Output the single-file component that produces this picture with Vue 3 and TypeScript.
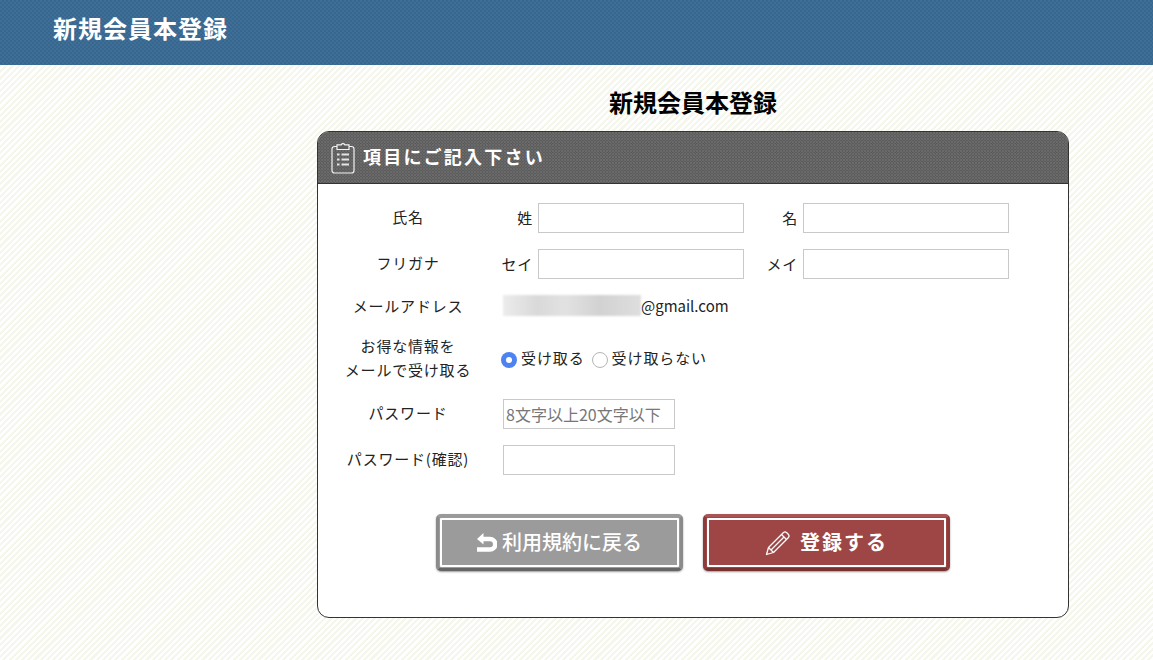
<script setup lang="ts">
interface NameField { sub: string }
const rows: { label: string; fields: NameField[] }[] = [
  { label: '氏名', fields: [{ sub: '姓' }, { sub: '名' }] },
  { label: 'フリガナ', fields: [{ sub: 'セイ' }, { sub: 'メイ' }] },
]
</script>

<template>
  <div class="page">
    <header class="top"><h1>新規会員本登録</h1></header>
    <main class="main">
      <h2 class="title">新規会員本登録</h2>
      <section class="card">
        <div class="card-head">
          <svg class="clip" width="26" height="32" viewBox="0 0 26 32" fill="none" stroke="#f2f2f2" stroke-width="1.2">
            <rect x="2" y="4.5" width="22" height="26.5" rx="2.5" />
            <path d="M7 4.5V2.8h4.2a2 2 0 0 1 3.6 0H19V7.5H7z" fill="#5c5c5c" />
            <path d="M7 12.5h2.5M7 17.5h2.5M7 22.5h2.5" stroke-width="1.8" stroke="#e4e4e4" />
            <path d="M11.5 12.5h7.5M11.5 17.5h7.5M11.5 22.5h7.5" stroke-width="1.8" stroke="#e4e4e4" />
          </svg>
          <span class="head-text">項目にご記入下さい</span>
        </div>
        <form class="form" @submit.prevent>
          <div v-for="row in rows" :key="row.label" class="row name-row">
            <div class="label">{{ row.label }}</div>
            <div class="value names">
              <label v-for="f in row.fields" :key="f.sub" class="name-field">
                <span class="sub">{{ f.sub }}</span>
                <input class="input wide" type="text" />
              </label>
            </div>
          </div>
          <div class="row email-row">
            <div class="label">メールアドレス</div>
            <div class="value email"><span class="blur"></span><span class="addr">@gmail.com</span></div>
          </div>
          <div class="row radio-row">
            <div class="label two">お得な情報を<br />メールで受け取る</div>
            <div class="value radios">
              <span class="radio on"></span><span class="r-text">受け取る</span>
              <span class="radio"></span><span class="r-text">受け取らない</span>
            </div>
          </div>
          <div class="row pw-row">
            <div class="label">パスワード</div>
            <div class="value pw"><input class="input short" type="text" placeholder="8文字以上20文字以下" /></div>
          </div>
          <div class="row pw-row second">
            <div class="label">パスワード(確認)</div>
            <div class="value pw"><input class="input short" type="text" /></div>
          </div>
          <div class="buttons">
            <button class="btn back" type="button">
              <svg width="20" height="19" viewBox="0 0 20 19">
                <path d="M0 6 L6.5 0 V11.5 Z" fill="#fff" />
                <path d="M5 6 H13 a5 5 0 0 1 0 10.5 H0" fill="none" stroke="#fff" stroke-width="4.6" />
              </svg>
              <span class="back-text">利用規約に戻る</span>
            </button>
            <button class="btn submit" type="button">
              <svg width="26" height="26" viewBox="0 0 26 26" fill="none" stroke="#fff" stroke-width="1.3" stroke-linejoin="round">
                <path d="M1.5 24.5 L3.5 17.5 L18.5 2.5 Q20 1.2 21.5 2.5 L23.5 4.5 Q24.8 6 23.5 7.5 L8.5 22.5 Z" />
                <path d="M3.5 17.5 L8.5 22.5 M16.5 4.5 L21.5 9.5 M6 20 L19 7" />
              </svg>
              <span class="spaced">登録する</span>
            </button>
          </div>
        </form>
      </section>
    </main>
  </div>
</template>

<style>
html, body { margin: 0; padding: 0; }
</style>

<style scoped>
* { box-sizing: border-box; }
.page {
  width: 1153px;
  height: 660px;
  overflow: hidden;
  font-family: "Noto Sans CJK JP", "Noto Sans", sans-serif;
  color: #222;
  background: repeating-linear-gradient(-45deg, #fff 0, #fff 2.2px, #f6f7ec 2.2px, #f6f7ec 4.4px);
}
.top {
  height: 65px;
  padding: 11px 0 0 53px;
  background-color: #37678f;
  background-image:
    radial-gradient(circle at 1px 1px, #3f6f97 0.9px, transparent 1px),
    radial-gradient(circle at 3px 3px, #3f6f97 0.9px, transparent 1px);
  background-size: 4px 4px;
}
.top h1 {
  margin: 0;
  font-size: 24px;
  line-height: 34px;
  letter-spacing: 1px;
  font-weight: 700;
  color: #fff;
}
.main { width: 752px; margin-left: 317px; }
.title {
  margin: 0;
  height: 66px;
  padding-top: 20px;
  text-align: center;
  font-size: 24px;
  line-height: 34px;
  font-weight: 700;
  color: #000;
}
.card {
  height: 487px;
  background: #fff;
  border: 1px solid #333;
  border-radius: 12px;
  overflow: hidden;
}
.card-head {
  height: 52px;
  display: flex;
  align-items: center;
  gap: 7px;
  padding-left: 12px;
  color: #fff;
  font-size: 18px;
  font-weight: 700;
  letter-spacing: 2.25px;
  line-height: 48px;
  background-color: #5c5c5c;
  background-image:
    radial-gradient(circle at 1px 1px, #6a6a6a 0.8px, transparent 0.9px),
    radial-gradient(circle at 2.5px 2.5px, #6a6a6a 0.8px, transparent 0.9px);
  background-size: 3px 3px;
  border-bottom: 1px solid #333;
}
.head-text { padding-bottom: 4px; }
.clip { flex: none; }
.form { padding-top: 19px; font-size: 15px; letter-spacing: 0.8px; }
.row { display: flex; align-items: center; }
.label { width: 180px; text-align: center; flex: none; line-height: 24px; }
.value { flex: 1; min-width: 0; }
.name-row { height: 30px; margin-bottom: 16px; }
.name-row .label { margin-top: -1px; padding-bottom: 2px; }
.names { display: flex; }
.name-field { display: flex; align-items: center; flex: none; }
.sub { width: 35px; text-align: right; margin-right: 5px; padding-bottom: 2px; flex: none; }
.name-field + .name-field .sub { width: 54px; }
.input {
  height: 30px;
  border: 1px solid #c9c9c9;
  background: #fff;
  border-radius: 0;
  outline: none;
  padding: 0 2px;
  font-family: inherit;
  font-size: 16px;
}
.input::placeholder { color: #777; opacity: 1; }
.wide { width: 206px; flex: none; }
.short { width: 172px; }
.email-row { height: 24px; margin-top: -2px; padding-top: 1px; }
.email { display: flex; align-items: center; padding-left: 5px; }
.addr { letter-spacing: 0; }
.blur {
  width: 138px;
  height: 21px;
  background: linear-gradient(90deg, #ececec, #d9d9d9 25%, #e2e2e2 45%, #d2d2d2 70%, #dedede);
  filter: blur(1px);
}
.radio-row { height: 48px; margin-top: 17px; }
.radios { display: flex; align-items: center; padding-left: 3px; }
.radio {
  width: 16px;
  height: 16px;
  border-radius: 50%;
  border: 1px solid #b5b5b5;
  background: #fff;
  flex: none;
  margin-top: 3px;
  margin-right: 4px;
}
.radio.on { background: #4d82f3; border: none; position: relative; }
.radio.on::after {
  content: "";
  position: absolute;
  left: 5px;
  top: 5px;
  width: 6px;
  height: 6px;
  border-radius: 50%;
  background: #fff;
}
.r-text { margin-right: 7px; padding-bottom: 2px; letter-spacing: 0.9px; }
.pw-row { height: 30px; margin-top: 17px; }
.pw-row.second { margin-top: 16px; }
.pw-row .label { padding-bottom: 2px; }
.pw { padding-left: 5px; }
.buttons {
  display: flex;
  justify-content: center;
  gap: 20px;
  margin-top: 39px;
}
.btn {
  width: 247px;
  height: 57px;
  border-radius: 5px;
  border: 3px solid;
  padding: 0;
  display: flex;
  align-items: center;
  justify-content: center;
  font-family: inherit;
  font-size: 20px;
  font-weight: 500;
  letter-spacing: 0;
  color: #fff;
  outline: 2px solid #fff;
  outline-offset: -6px;
}
.btn span { padding-bottom: 2px; }
.back {
  background: #9b9b9b;
  border-color: #9a9a9a #8b8b8b #666;
  box-shadow: 0 1px 2px rgba(0, 0, 0, 0.4);
  gap: 5px;
}
.submit {
  background: #9d4645;
  border-color: #a85655 #8d3c3b #7a3231;
  box-shadow: 0 1px 2px rgba(0, 0, 0, 0.4);
  gap: 9px;
}
.spaced { letter-spacing: 2px; font-weight: 700; }
</style>
